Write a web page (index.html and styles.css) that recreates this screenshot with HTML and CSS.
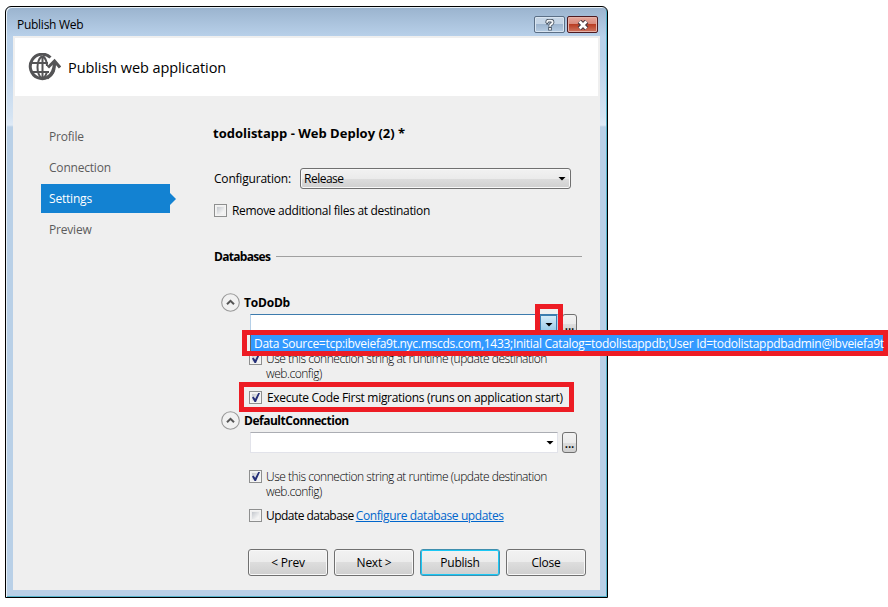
FILE: index.html
```html
<!DOCTYPE html>
<html lang="en">
<head>
<meta charset="utf-8">
<title>Publish Web</title>
<link rel="stylesheet" href="styles.css">
</head>
<body>
<div class="window">
  <div class="titlebar">
    <span class="caption">Publish Web</span>
    <div class="win-btn help"><svg width="10" height="12" viewBox="0 0 10 12"><path d="M1.2 3.6H3.2M2.2 4V2.8Q2.2 1.6 3.6 1.6H6Q7.6 1.6 7.6 3.2Q7.6 4.5 6.3 5.2Q5 5.8 5 7.6M5 8V11.6" fill="none" stroke="#4b5663" stroke-width="3.6"/><path d="M2.2 3.8V2.8Q2.2 1.6 3.6 1.6H6Q7.6 1.6 7.6 3.2Q7.6 4.5 6.3 5.2Q5 5.8 5 7.4M5 9V10.8" fill="none" stroke="#f4f6f8" stroke-width="1.9"/></svg></div>
    <div class="win-btn close"><svg width="12" height="10" viewBox="0 0 12 10"><path d="M2.4 1.4L9.6 8.6M9.6 1.4L2.4 8.6" stroke="#4d3a40" stroke-width="5"/><path d="M2.6 1.6L9.4 8.4M9.4 1.6L2.6 8.4" stroke="#fff" stroke-width="2.8"/></svg></div>
  </div>
  <div class="client">
    <header class="header">
      <svg class="globe" width="33" height="30" viewBox="0 0 33 30" fill="none" stroke="#545456"><path d="M22.5 4.5A12 12.2 0 1 0 26 16" stroke-width="3"/><path d="M14 3C8 8 8 20 14 26M15 3C18 6 19 9 19 13M15 26Q18 23 19 19M3.5 10H20M3.5 19H21M14.5 3V26" stroke-width="2"/><path d="M19 25Q26.5 20 26.5 10" stroke-width="3.4"/><path d="M20 14.5L26.5 8L32 14.5" stroke-width="3"/></svg>
      <h1>Publish web application</h1>
    </header>
    <div class="body">
      <nav class="nav">
        <a>Profile</a>
        <a>Connection</a>
        <a class="active">Settings</a>
        <a>Preview</a>
      </nav>
      <main class="main">
        <h2>todolistapp - Web Deploy (2) *</h2>
        <div class="row config">
          <label class="t-conf">Configuration:</label>
          <div class="select"><span class="t-rel">Release</span><i class="arrow"></i></div>
        </div>
        <div class="row remove"><i class="cb"></i><span class="t-rem">Remove additional files at destination</span></div>
        <div class="row section"><b class="t-dbs">Databases</b><hr></div>
        <div class="db-head first"><svg width="19" height="19" viewBox="0 0 19 19" fill="none"><circle cx="9.5" cy="9.5" r="8.8" fill="#f1f1f1" stroke="#999" stroke-width="1.1"/><path d="M6 11.3L9.5 7.9L13 11.3" stroke="#555" stroke-width="2"/></svg><b class="t-todo">ToDoDb</b></div>
        <div class="combo-row"><div class="combo focus"><span class="drop"><i class="arrow"></i></span></div><div class="more"><span>...</span></div></div>
        <div class="row check"><i class="cb on"></i><p class="thin">Use this connection string at runtime (update destination<br>web.config)</p></div>
        <div class="row exec"><i class="cb on"></i><span class="t-exec">Execute Code First migrations (runs on application start)</span></div>
        <div class="db-head second"><svg width="19" height="19" viewBox="0 0 19 19" fill="none"><circle cx="9.5" cy="9.5" r="8.8" fill="#f1f1f1" stroke="#999" stroke-width="1.1"/><path d="M6 11.3L9.5 7.9L13 11.3" stroke="#555" stroke-width="2"/></svg><b class="t-def">DefaultConnection</b></div>
        <div class="combo-row"><div class="combo"><i class="arrow"></i></div><div class="more"><span>...</span></div></div>
        <div class="row check"><i class="cb on"></i><p class="thin">Use this connection string at runtime (update destination<br>web.config)</p></div>
        <div class="row update"><i class="cb"></i><span class="t-upd">Update database</span><a class="link">Configure database updates</a></div>
        <div class="buttons">
          <button>&lt; Prev</button><button>Next &gt;</button><button class="default">Publish</button><button>Close</button>
        </div>
      </main>
    </div>
  </div>
</div>
<div class="mark mark-arrow"></div>
<div class="mark mark-exec"></div>
<div class="mark popup"><div class="option">Data Source=tcp:ibveiefa9t.nyc.mscds.com,1433;Initial Catalog=todolistappdb;User Id=todolistappdbadmin@ibveiefa9t</div></div>
</body>
</html>
```

FILE: styles.css
```css
* { box-sizing: border-box; }
body {
  margin: 0; width: 888px; height: 607px; overflow: hidden; position: relative;
  background: #fff; color: #000;
  font: 12px/17px "Open Sans", "Noto Sans", sans-serif;
}
h1, h2, p { margin: 0; font-weight: 400; }
span, b, label, a, h1 { white-space: nowrap; }
i { display: block; flex: none; }

.window {
  margin: 6px 0 0 5px; width: 603px; height: 592px;
  border: 1px solid #000; border-radius: 6px 6px 0 0;
  padding: 0 7px 7px;
  background: linear-gradient(#9ab3ce 0, #b9d1ea 30px, #b9d1ea 48px, #d5e4f3 110px, #dfeaf6 118px, #b9d0e7 120px);
  box-shadow: inset 1px 1px 0 #e8f1f8, inset -1px -1px 0 #56b4cb;
}
.titlebar { height: 29px; display: flex; align-items: flex-start; padding: 9px 2px 0 4px; }
.caption { flex: 1; letter-spacing: -.27px; }
.win-btn {
  width: 31px; height: 17px; border: 1px solid #5b6f86; border-radius: 2px;
  background: linear-gradient(#c5d5e6 0 45%, #9db5cf 50%, #b7cde4);
  box-shadow: inset 0 0 0 1px #d9e5f1; display: flex; align-items: center; justify-content: center;
}
.close { margin-left: 2px; border-color: #4d1a20; background: linear-gradient(#e6a79c 0, #d98a7c 45%, #b93e24 50%, #cf7560); box-shadow: inset 0 0 0 1px #e5b2a8; }
.client { height: 554px; background: #efefef; padding: 2px; }
.header { height: 58px; background: #fff; display: flex; align-items: center; padding-left: 13px; }
.globe { flex: none; margin-top: 2px; }
h1 { font-size: 14.5px; line-height: 20px; margin: 2px 0 0 7px; letter-spacing: -.08px; }
.body { display: flex; }

.nav { width: 129px; margin: 26px 0 0 26px; flex: none; color: #5c5c5c; display: flex; flex-direction: column; gap: 2px; }
.nav a { height: 29px; line-height: 29px; padding-left: 8px; letter-spacing: -.2px; }
.nav .active { background: #1382d2; color: #fff; position: relative; }
.active::after { content: ""; position: absolute; left: 129px; top: 9px; border: 6px solid transparent; border-left-color: #1382d2; border-right: 0; }

.main { margin-left: 44px; width: 373px; }
h2 { font-size: 13px; font-weight: 700; line-height: 20px; margin-top: 27px; height: 20px; margin-left: -1px; }
.row { display: flex; align-items: center; }
.config { height: 21px; margin-top: 25px; }
.config label { width: 86px; letter-spacing: -.2px; }
.select {
  width: 271px; height: 21px; border: 1px solid #707070; border-radius: 3px; padding: 0 4px 0 3px;
  background: linear-gradient(#f2f2f2, #ebebeb 50%, #dddddd 50%, #cfcfcf); box-shadow: inset 0 0 0 1px #f8f8f8;
  display: flex; align-items: center; justify-content: space-between;
}
.t-rel { letter-spacing: -.5px; }
.t-rem { letter-spacing: -.32px; }
.t-dbs { width: 56px; letter-spacing: -.7px; }
.t-todo { letter-spacing: -.2px; }
.t-def { letter-spacing: -.48px; }
.t-exec { letter-spacing: -.305px; }
.t-upd { letter-spacing: -.53px; }
.arrow { width: 8px; height: 4px; background: #000; clip-path: polygon(0 0, 100% 0, 50% 100%); }
.cb {
  width: 13px; height: 13px; border: 1px solid #8e8f8f; position: relative;
  background: linear-gradient(135deg, #c3c7cd, #f4f4f4 80%) content-box; padding: 2px;
  box-shadow: inset 0 0 0 1px #f4f4f4;
}
.on::after { content: ""; position: absolute; left: 2px; top: 1px; width: 8px; height: 9px; background: #252f78; clip-path: polygon(0 50%, 18% 40%, 40% 64%, 78% 0, 100% 0, 50% 100%, 32% 100%); }
.remove { height: 13px; margin-top: 15px; gap: 5px; }
.section { height: 17px; margin-top: 31px; gap: 6px; }
hr { flex: none; width: 306px; height: 1px; border: 0; margin: 0; background: #a0a0a0; }
.db-head { display: flex; align-items: center; gap: 4px; height: 19px; margin-left: 7px; }
.first { margin-top: 28px; }
.second { margin-top: 7px; }
.combo-row { display: flex; gap: 4px; margin: 2px 0 0 36px; height: 21px; }
.combo { width: 308px; background: #fff; border: 1px solid #e2e3ea; border-top-color: #abadb3; display: flex; align-items: center; justify-content: flex-end; padding-right: 3px; }
.focus { border-color: #3d7bad #b5cfe7 #b7d9ed #b5cfe7; padding: 0; }
.drop { width: 17px; height: 19px; border: 1px solid #3c7fb1; background: linear-gradient(#d5ebf8, #8fc6e6); display: flex; align-items: center; justify-content: center; padding-left: 1px; }
.more { width: 15px; border: 1px solid #707070; border-radius: 3px; background: linear-gradient(#f2f2f2, #ebebeb 50%, #ddd 50%, #cfcfcf); text-align: center; font-weight: 600; line-height: 21px; letter-spacing: -.2px; }
.check { align-items: flex-start; gap: 4px; margin: 17px 0 0 35px; height: 31px; }
.thin { font-weight: 300; line-height: 15px; margin-top: -1px; letter-spacing: -.465px; white-space: nowrap; }
.exec { margin: 8px 0 0 35px; gap: 5px; height: 13px; }
.update { margin: 8px 0 0 35px; height: 13px; gap: 4px; }
.link { color: #0066cc; text-decoration: underline; margin-left: -2px; letter-spacing: -.38px; }
.buttons { display: flex; gap: 6px; margin: 27px 0 0 34px; }
button {
  flex: none; width: 80px; height: 27px; padding: 0; font: inherit; letter-spacing: -.25px; color: #000; border: 1px solid #707070; border-radius: 3px;
  background: linear-gradient(#f2f2f2, #ebebeb 50%, #ddd 50%, #cfcfcf); box-shadow: inset 0 0 0 1px #f8f8f8;
}
.default { border-color: #3f8fae; box-shadow: inset 0 0 0 1px #1bc8f5; }

.mark { position: absolute; border: 5px solid #ed1c24; }
.mark-arrow { left: 535px; top: 304px; width: 28px; height: 31px; }
.mark-exec { left: 239px; top: 382px; width: 335px; height: 30px; }
.popup { left: 242px; top: 330px; width: 646px; height: 26px; background: #f0f0f0; padding-left: 3px; }
.option { height: 16px; border-left: 1px solid #646464; background: #3399ff; color: #fff; padding-left: 3px; line-height: 17px; white-space: nowrap; letter-spacing: -.285px; }
```
